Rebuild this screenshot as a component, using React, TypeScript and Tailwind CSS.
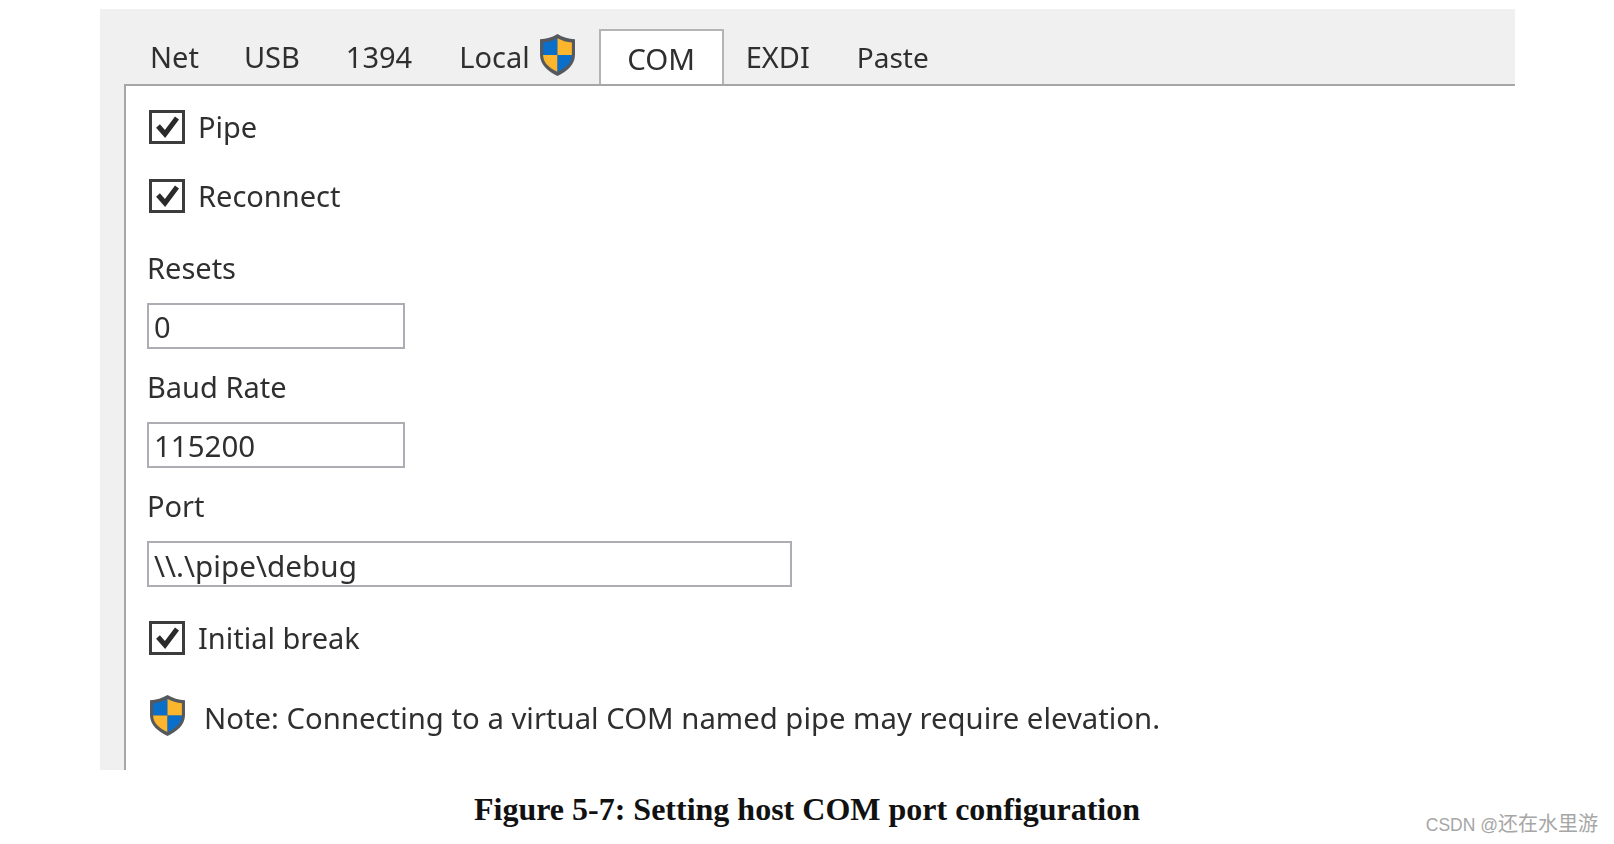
const uiFont = "font-['Noto_Sans',sans-serif] text-[#2f2f2f] leading-[40px] blur-[0.6px]";

function Shield({ className }: { className: string }) {
  return (
    <svg viewBox="0 0 36 42" preserveAspectRatio="none" className={className}>
      <path d="M18 1 C23 4 29 6 35 6 L35 21 C35 30 27 37 18 41 C9 37 1 30 1 21 L1 6 C7 6 13 4 18 1 Z" fill="#55595d" />
      <path d="M18 5 L18 21 L4 21 L4 9 C9 9 14 7 18 5 Z" fill="#0a6ecb" />
      <path d="M18 5 C22 7 27 9 32 9 L32 21 L18 21 Z" fill="#fcb62e" />
      <path d="M4 21 L18 21 L18 37 C11 34 4 29 4 21 Z" fill="#fcb62e" />
      <path d="M18 21 L32 21 C32 29 25 34 18 37 Z" fill="#0a6ecb" />
    </svg>
  );
}

function Check({ label, className }: { label: string; className: string }) {
  return (
    <div className={`flex items-center ml-[2px] ${className}`}>
      <div className="w-[36px] h-[34px] border-[3px] border-[#3c3c3c] bg-white blur-[0.5px]">
        <svg viewBox="0 0 30 28" className="w-[30px] h-[28px]" fill="none" stroke="#2a2a2a" strokeWidth="5">
          <path d="M6 13 L13 21 L25 5" />
        </svg>
      </div>
      <span className={`${uiFont} text-[29px] ml-[13px]`}>{label}</span>
    </div>
  );
}

function Field({ label, value, width, className, valueClass }: { label: string; value: string; width: string; className: string; valueClass: string }) {
  return (
    <div className={className}>
      <div className={`${uiFont} text-[29px] h-[40px]`}>{label}</div>
      <div className={`${width} h-[46px] mt-[15px] border-2 border-[#adadb3] bg-white pl-[5px] flex items-center blur-[0.3px]`}>
        <span className={`${uiFont} ${valueClass}`}>{value}</span>
      </div>
    </div>
  );
}

export default function App() {
  return (
    <div className="relative w-[1614px] h-[844px] bg-white overflow-hidden">
      <div className="ml-[100px] pt-[9px] w-[1415px]">
        <div className="bg-[#f0f0f0] h-[761px] flex flex-col">
          <div className="h-[75px] flex items-end pl-[24px] shrink-0">
            <div className="flex items-end h-[55px] w-full">
              <span className={`${uiFont} text-[29px] ml-[26px] mb-[7px]`}>Net</span>
              <span className={`${uiFont} text-[29px] ml-[45px] mb-[7px]`}>USB</span>
              <span className={`${uiFont} text-[29px] ml-[46px] mb-[7px]`}>1394</span>
              <span className={`${uiFont} text-[29px] ml-[47px] mb-[7px]`}>Local</span>
              <Shield className="w-[37px] h-[44px] ml-[9px] mb-[7px] blur-[0.5px]" />
              <div className="ml-[23px] w-[125px] h-[55px] bg-white border-2 border-b-0 border-[#b4b4b4] flex items-end justify-center">
                <span className={`${uiFont} text-[29.5px] mb-[5px]`}>COM</span>
              </div>
              <span className={`${uiFont} text-[29px] ml-[22px] mb-[7px]`}>EXDI</span>
              <span className={`${uiFont} text-[28px] ml-[47px] mb-[7px]`}>Paste</span>
            </div>
          </div>
          <div className="ml-[24px] flex-1 bg-white border-l-2 border-t-2 border-[#a6a6a6] pl-[21px] pt-[21px]">
            <Check label="Pipe" className="" />
            <Check label="Reconnect" className="mt-[29px]" />
            <Field label="Resets" value="0" width="w-[258px]" valueClass="text-[29px] mt-[2px]" className="mt-[32px]" />
            <Field label="Baud Rate" value="115200" width="w-[258px]" valueClass="text-[29.5px] mt-[2px]" className="mt-[18px]" />
            <Field label="Port" value="\\.\pipe\debug" width="w-[645px]" valueClass="text-[29.7px] mt-[3px]" className="mt-[18px]" />
            <Check label="Initial break" className="mt-[31px]" />
            <div className="flex items-center mt-[36px]">
              <Shield className="w-[37px] h-[43px] ml-[2px] mb-[1px] blur-[0.5px]" />
              <span className={`${uiFont} text-[29.3px] ml-[18px] mt-[4px]`}>Note: Connecting to a virtual COM named pipe may require elevation.</span>
            </div>
          </div>
        </div>
      </div>
      <div className="text-center mt-[19px] font-['Liberation_Serif',serif] font-bold text-[32px] leading-[40px] text-[#111]">
        Figure 5-7: Setting host COM port configuration
      </div>
      <div className="absolute right-[16px] bottom-[6px] font-['Liberation_Sans','Noto_Sans_CJK_SC',sans-serif] text-[20px] leading-[26px] text-[#a6a6a6]">
        <span className="text-[17.5px]">CSDN @</span>还在水里游
      </div>
    </div>
  );
}
